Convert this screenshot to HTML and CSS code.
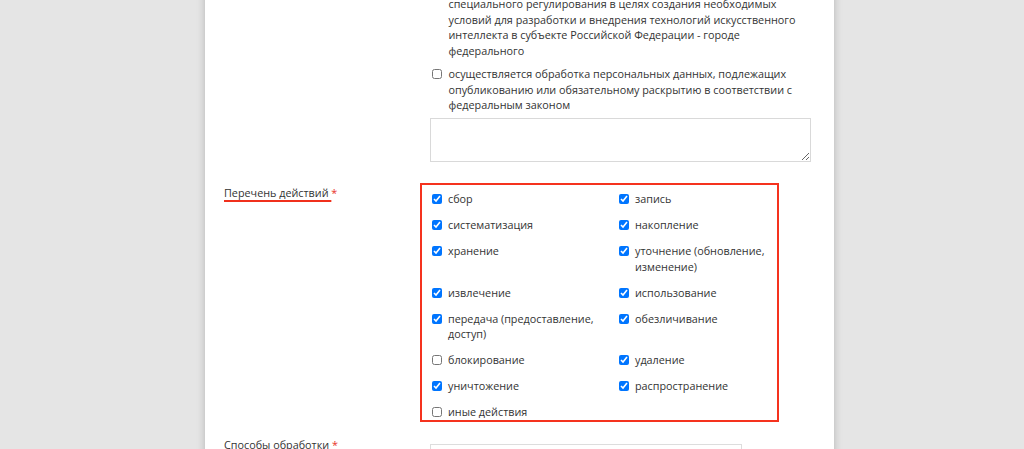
FILE: index.html
```html
<!DOCTYPE html>
<html lang="ru">
<head>
<meta charset="utf-8">
<title>Форма</title>
<link rel="stylesheet" href="styles.css">
</head>
<body>
<div class="page">
  <div class="panel">
    <div class="field">
      <div class="label"></div>
      <div class="control">
        <div class="checks">
          <label class="check"><input type="checkbox"><span>осуществляется обработка персональных данных в целях<br>специального регулирования в целях создания необходимых условий для разработки и внедрения технологий искусственного интеллекта в субъекте Российской Федерации - городе федерального</span></label>
          <label class="check"><input type="checkbox"><span>осуществляется обработка персональных данных, подлежащих опубликованию или обязательному раскрытию в соответствии с федеральным законом</span></label>
        </div>
        <textarea class="textarea"></textarea>
      </div>
    </div>

    <div class="field field-actions">
      <div class="label label-actions"><span class="hl">Перечень действий </span><span class="req">*</span></div>
      <div class="control">
        <div class="actions">
          <label class="check"><input type="checkbox" checked><span>сбор</span></label>
          <label class="check"><input type="checkbox" checked><span>запись</span></label>
          <label class="check"><input type="checkbox" checked><span>систематизация</span></label>
          <label class="check"><input type="checkbox" checked><span>накопление</span></label>
          <label class="check"><input type="checkbox" checked><span>хранение</span></label>
          <label class="check"><input type="checkbox" checked><span>уточнение (обновление, изменение)</span></label>
          <label class="check"><input type="checkbox" checked><span>извлечение</span></label>
          <label class="check"><input type="checkbox" checked><span>использование</span></label>
          <label class="check"><input type="checkbox" checked><span>передача (предоставление, доступ)</span></label>
          <label class="check"><input type="checkbox" checked><span>обезличивание</span></label>
          <label class="check"><input type="checkbox"><span>блокирование</span></label>
          <label class="check"><input type="checkbox" checked><span>удаление</span></label>
          <label class="check"><input type="checkbox" checked><span>уничтожение</span></label>
          <label class="check"><input type="checkbox" checked><span>распространение</span></label>
          <label class="check"><input type="checkbox"><span>иные действия</span></label>
        </div>
      </div>
    </div>

    <div class="field field-methods">
      <div class="label">Способы обработки <span class="req">*</span></div>
      <div class="control">
        <div class="select"></div>
      </div>
    </div>
  </div>
</div>
</body>
</html>
```

FILE: styles.css
```css
html, body {
  margin: 0;
  padding: 0;
}
body {
  background: #e5e5e5;
  font-family: "Open Sans", "Noto Sans", sans-serif;
  font-size: 10.8px;
  line-height: 15.5px;
  color: #333333;
  overflow: hidden;
  height: 449px;
}
.page {
  margin-top: -19.25px;
}
.panel {
  width: 629px;
  margin-left: 205px;
  background: #ffffff;
  box-shadow: 0 0 8px rgba(0, 0, 0, 0.22);
  padding: 0 23px 40px 19px;
  box-sizing: border-box;
}
.field {
  display: grid;
  grid-template-columns: 206px 381px;
}
.checks {
  display: flex;
  flex-direction: column;
  gap: 8px;
}
.check {
  display: flex;
  align-items: flex-start;
  gap: 6.5px;
}
.checks .check {
  padding-left: 2px;
}
.check input {
  width: 10px;
  height: 10px;
  margin: 3px 0 0 0;
  flex: none;
}
.textarea {
  display: block;
  box-sizing: border-box;
  width: 381px;
  height: 44px;
  margin: 5.25px 0 0 0;
  border: 1px solid #d9d9d9;
  resize: vertical;
  font: inherit;
}
.field-actions {
  margin-top: 21px;
}
.label-actions {
  padding-top: 2.25px;
}
.hl {
  text-decoration: underline;
  text-decoration-color: #f0301c;
  text-decoration-thickness: 2px;
  text-underline-offset: 3px;
}
.req {
  color: #e8322a;
}
.actions {
  box-sizing: border-box;
  width: 358.5px;
  margin-left: -10px;
  border: 2px solid #f5321e;
  padding: 6.25px 8px 0 9.5px;
  display: grid;
  grid-template-columns: 187px 1fr;
  row-gap: 10.5px;
}
.field-methods {
  margin-top: 15.25px;
}
.select {
  margin-top: 7px;
  width: 312px;
  height: 30px;
  box-sizing: border-box;
  border: 1px solid #dddddd;
}
```
